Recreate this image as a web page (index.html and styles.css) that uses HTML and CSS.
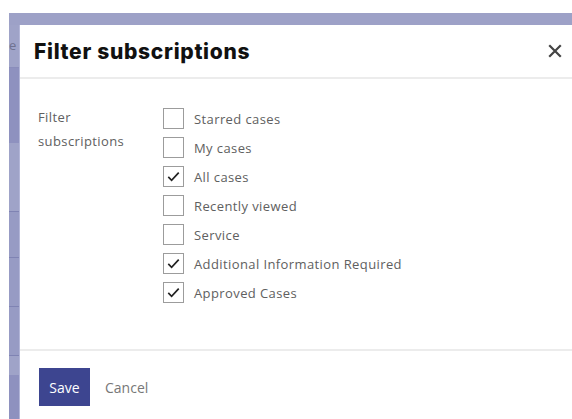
FILE: index.html
```html
<!DOCTYPE html>
<html lang="en">
<head>
<meta charset="utf-8">
<title>Filter subscriptions</title>
<link rel="stylesheet" href="styles.css">
</head>
<body>
<div class="backdrop">
  <div class="backdrop-top"></div>
  <div class="backdrop-row">
    <div class="rail">
      <div class="seg seg-light seg-a"><span class="rail-text">e</span></div>
      <div class="seg seg-dark seg-b"></div>
      <div class="seg seg-light seg-c"></div>
      <div class="seg seg-mid seg-d"></div>
      <div class="seg seg-mid seg-e"></div>
      <div class="seg seg-mid seg-f"></div>
      <div class="seg seg-light seg-g"></div>
      <div class="seg seg-dark seg-h"></div>
    </div>
    <div class="modal">
      <div class="modal-header">
        <h1 class="modal-title">Filter subscriptions</h1>
        <button class="close" aria-label="Close">
          <svg width="14" height="14" viewBox="0 0 14 14"><path d="M2 2L12 12M12 2L2 12" stroke="#444" stroke-width="2.2" stroke-linecap="square"/></svg>
        </button>
      </div>
      <div class="modal-body">
        <div class="field-label">Filter<br>subscriptions</div>
        <ul class="options">
          <li class="option"><span class="box"></span>Starred cases</li>
          <li class="option"><span class="box"></span>My cases</li>
          <li class="option"><span class="box checked"><svg viewBox="0 0 20 20"><path d="M4.5 10.5L8 14L15.5 6" fill="none" stroke="#222" stroke-width="1.8"/></svg></span>All cases</li>
          <li class="option"><span class="box"></span>Recently viewed</li>
          <li class="option"><span class="box"></span>Service</li>
          <li class="option"><span class="box checked"><svg viewBox="0 0 20 20"><path d="M4.5 10.5L8 14L15.5 6" fill="none" stroke="#222" stroke-width="1.8"/></svg></span>Additional Information Required</li>
          <li class="option"><span class="box checked"><svg viewBox="0 0 20 20"><path d="M4.5 10.5L8 14L15.5 6" fill="none" stroke="#222" stroke-width="1.8"/></svg></span>Approved Cases</li>
        </ul>
      </div>
      <div class="modal-footer">
        <button class="btn-save">Save</button>
        <button class="btn-cancel">Cancel</button>
      </div>
    </div>
  </div>
</div>
</body>
</html>
```
FILE: styles.css
```css
html, body {
  margin: 0;
  padding: 0;
  background: #fff;
  height: 419px;
  overflow: hidden;
}

body {
  font-family: "Open Sans", "Liberation Sans", sans-serif;
}

.backdrop {
  margin: 13px 0 0 9px;
  background: #9da1c7;
  height: 406px;
  display: flex;
  flex-direction: column;
}

.backdrop-top {
  height: 12px;
  flex: none;
}

.backdrop-row {
  flex: 1;
  display: flex;
  min-height: 0;
}

.rail {
  width: 11px;
  flex: none;
  display: flex;
  flex-direction: column;
  border-right: 1px solid #b3b6d8;
  box-sizing: border-box;
  overflow: hidden;
}

.seg { flex: none; box-sizing: border-box; }
.seg-light { background: #9fa3c8; }
.seg-mid { background: #979bc4; border-top: 1px solid #7f83b3; }
.seg-dark { background: #8e91bf; }

.seg-a { height: 42px; position: relative; }
.seg-b { height: 76px; border-top: 1px solid #8a8dbb; }
.seg-c { height: 68px; }
.seg-d { height: 46px; }
.seg-e { height: 49px; }
.seg-f { height: 49px; }
.seg-g { height: 20px; border-top: 1px solid #7f83b3; }
.seg-h { flex: 1; }

.rail-text {
  position: absolute;
  left: 0;
  top: 11px;
  font-size: 13px;
  color: #6f7290;
}

.modal {
  flex: 1;
  background: #fff;
  display: flex;
  flex-direction: column;
  min-width: 0;
}

.modal-header {
  height: 52px;
  flex: none;
  display: flex;
  align-items: center;
  justify-content: space-between;
  padding: 0 10px 0 14px;
  border-bottom: 2px solid #ececec;
}

.modal-title {
  margin: 0;
  font-family: "Inter", "Liberation Sans", sans-serif;
  font-size: 21px;
  font-weight: 800;
  color: #111;
  letter-spacing: 0.7px;
}

.close {
  border: 0;
  background: none;
  padding: 0;
  width: 14px;
  height: 14px;
  display: flex;
}

.modal-body {
  height: 270px;
  flex: none;
  display: grid;
  grid-template-columns: 125px 1fr;
  padding: 25px 0 0 18px;
  box-sizing: border-box;
}

.field-label {
  font-size: 13px;
  line-height: 24px;
  color: #606060;
  letter-spacing: 0.4px;
  margin-top: 1px;
}

.options {
  list-style: none;
  margin: 0;
  padding: 0;
}

.option {
  height: 29px;
  display: flex;
  align-items: center;
  font-size: 13px;
  color: #606060;
  letter-spacing: 0.4px;
}

.box {
  width: 21px;
  height: 21px;
  border: 1px solid #9c9c9c;
  box-sizing: border-box;
  margin-right: 10px;
  background: #fff;
  display: flex;
}

.box svg {
  width: 19px;
  height: 19px;
}

.modal-footer {
  flex: 1;
  border-top: 2px solid #ececec;
  display: flex;
  align-items: flex-start;
  padding: 17px 0 0 19px;
}

.btn-save {
  width: 51px;
  height: 38px;
  border: 0;
  background: #3d4590;
  color: #fff;
  font-family: "Open Sans", "Liberation Sans", sans-serif;
  font-size: 14px;
  padding: 0;
}

.btn-cancel {
  border: 0;
  background: none;
  color: #777;
  font-family: "Open Sans", "Liberation Sans", sans-serif;
  font-size: 14px;
  height: 38px;
  padding: 0;
  margin-left: 15px;
}
```
